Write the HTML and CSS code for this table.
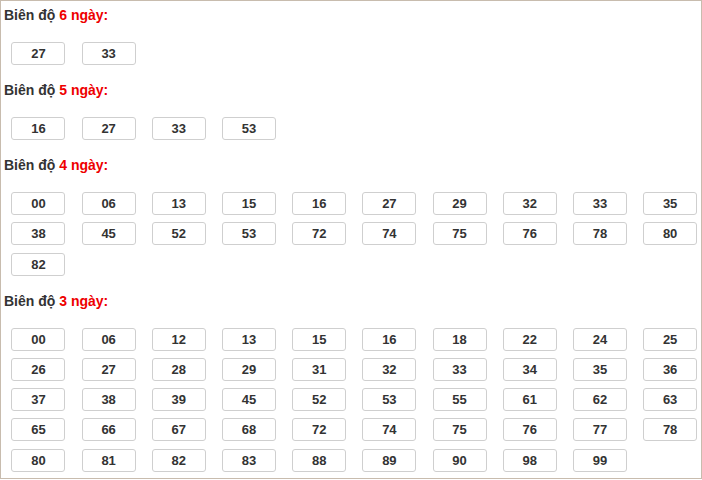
FILE: index.html
```html
<!DOCTYPE html>
<html lang="vi">
<head>
<meta charset="utf-8">
<link rel="stylesheet" href="styles.css">
</head>
<body>
<div class="panel">
  <section class="sec">
    <h3 class="title">Biên độ <span class="hl">6 ngày:</span></h3>
    <div class="grid">
      <span class="num">27</span><span class="num">33</span>
    </div>
  </section>
  <section class="sec">
    <h3 class="title">Biên độ <span class="hl">5 ngày:</span></h3>
    <div class="grid">
      <span class="num">16</span><span class="num">27</span><span class="num">33</span><span class="num">53</span>
    </div>
  </section>
  <section class="sec">
    <h3 class="title">Biên độ <span class="hl">4 ngày:</span></h3>
    <div class="grid">
      <span class="num">00</span><span class="num">06</span><span class="num">13</span><span class="num">15</span><span class="num">16</span><span class="num">27</span><span class="num">29</span><span class="num">32</span><span class="num">33</span><span class="num">35</span>
      <span class="num">38</span><span class="num">45</span><span class="num">52</span><span class="num">53</span><span class="num">72</span><span class="num">74</span><span class="num">75</span><span class="num">76</span><span class="num">78</span><span class="num">80</span>
      <span class="num">82</span>
    </div>
  </section>
  <section class="sec">
    <h3 class="title">Biên độ <span class="hl">3 ngày:</span></h3>
    <div class="grid">
      <span class="num">00</span><span class="num">06</span><span class="num">12</span><span class="num">13</span><span class="num">15</span><span class="num">16</span><span class="num">18</span><span class="num">22</span><span class="num">24</span><span class="num">25</span>
      <span class="num">26</span><span class="num">27</span><span class="num">28</span><span class="num">29</span><span class="num">31</span><span class="num">32</span><span class="num">33</span><span class="num">34</span><span class="num">35</span><span class="num">36</span>
      <span class="num">37</span><span class="num">38</span><span class="num">39</span><span class="num">45</span><span class="num">52</span><span class="num">53</span><span class="num">55</span><span class="num">61</span><span class="num">62</span><span class="num">63</span>
      <span class="num">65</span><span class="num">66</span><span class="num">67</span><span class="num">68</span><span class="num">72</span><span class="num">74</span><span class="num">75</span><span class="num">76</span><span class="num">77</span><span class="num">78</span>
      <span class="num">80</span><span class="num">81</span><span class="num">82</span><span class="num">83</span><span class="num">88</span><span class="num">89</span><span class="num">90</span><span class="num">98</span><span class="num">99</span>
    </div>
  </section>
</div>
</body>
</html>
```
FILE: styles.css
```css
html, body {
  margin: 0;
  padding: 0;
  background: #fff;
}
body {
  font-family: "Liberation Sans", Arial, sans-serif;
}
.panel {
  box-sizing: border-box;
  width: 702px;
  height: 479px;
  border: 1px solid #c8bcae;
  padding-top: 7px;
  overflow: hidden;
}
.sec {
  margin-bottom: 18px;
}
.title {
  margin: 0;
  padding-left: 3px;
  font-size: 14px;
  line-height: 15px;
  font-weight: bold;
  color: #333;
}
.hl {
  color: #ee0000;
}
.grid {
  margin-top: 19px;
  padding-left: 10.45px;
  display: grid;
  grid-template-columns: repeat(10, 70.2px);
  row-gap: 7.25px;
}
.num {
  box-sizing: border-box;
  width: 54px;
  height: 23px;
  border: 1px solid #cfcfcf;
  border-radius: 3px;
  text-align: center;
  font-size: 13px;
  line-height: 21px;
  font-weight: bold;
  color: #333;
}
```
